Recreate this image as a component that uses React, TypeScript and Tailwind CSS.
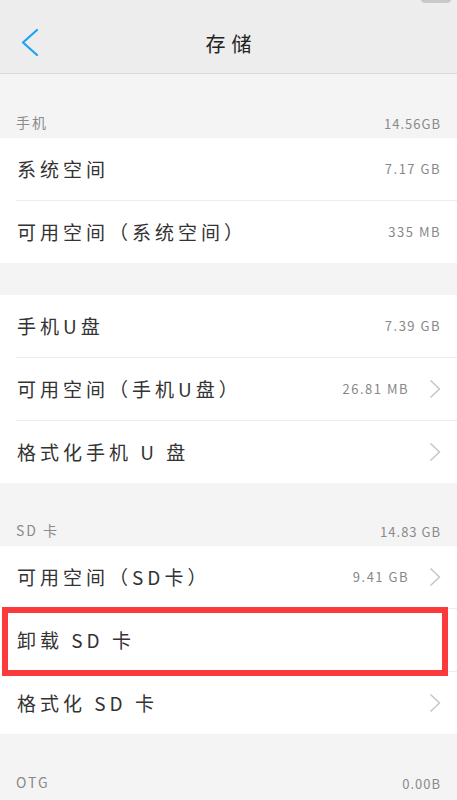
type Row = { label: string; value?: string; arrow?: boolean; marked?: boolean };

const font = { fontFamily: '"Noto Sans CJK SC", "Noto Sans", sans-serif' };

function Arrow() {
  return (
    <svg width="12" height="20" viewBox="0 0 12 20" fill="none" className="text-[#c4c4c4]">
      <polyline points="1.5,1.5 10.5,10 1.5,18.5" stroke="currentColor" strokeWidth="1.4" />
    </svg>
  );
}

function SectionLabel({ label, value, tall = true }: { label: string; value: string; tall?: boolean }) {
  return (
    <div className={`flex items-end justify-between bg-[#f4f4f4] px-4 pb-[5px] ${tall ? 'h-[64px]' : 'h-[63px]'}`}>
      <span className="text-[14px] tracking-[2px] text-[#8a8a8a]">{label}</span>
      <span className="text-[13px] tracking-[1px] text-[#8a8a8a]">{value}</span>
    </div>
  );
}

function Group({ rows }: { rows: Row[] }) {
  return (
    <div className="bg-white">
      {rows.map((r, i) => (
        <div key={r.label} className="relative">
          {i > 0 && <div className="ml-4 h-px bg-[#ececec]" />}
          <div className="flex h-[62px] items-center justify-between pl-[17px] pr-[16px]">
            <span className="text-[19px] tracking-[4px] text-[#333]">{r.label}</span>
            <div className="flex items-center gap-[20px]">
              {r.value && <span className="text-[13px] tracking-[1.5px] text-[#888]">{r.value}</span>}
              {r.arrow && <Arrow />}
            </div>
          </div>
          {r.marked && (
            <div className="pointer-events-none absolute left-[2px] right-[9px] top-[-1px] bottom-[-5px] z-10 border-[6px] border-[#fb3b3b]" />
          )}
        </div>
      ))}
    </div>
  );
}

export default function App() {
  return (
    <div className="min-h-[800px] w-[457px] overflow-hidden bg-[#f4f4f4]" style={font}>
      <div className="relative flex h-[74px] items-center justify-center border-b border-[#d8d8d8] bg-[#ededed] pt-[14px]">
        <div className="absolute right-[6px] top-[-6px] h-[9px] w-[30px] rounded-sm bg-[#c9c9c9]" />
        <button className="absolute left-[20px] top-[28px] text-[#1aa3f5]">
          <svg width="19" height="29" viewBox="0 0 19 29" fill="none">
            <polyline points="17,2 3,14.5 17,27" stroke="currentColor" strokeWidth="2.2" strokeLinecap="round" strokeLinejoin="round" />
          </svg>
        </button>
        <h1 className="pl-[6px] text-[20px] tracking-[6px] text-[#222]">存储</h1>
      </div>

      <SectionLabel label="手机" value="14.56GB" />
      <Group
        rows={[
          { label: '系统空间', value: '7.17 GB' },
          { label: '可用空间（系统空间）', value: '335 MB' },
        ]}
      />

      <div className="h-[32px]" />
      <Group
        rows={[
          { label: '手机U盘', value: '7.39 GB' },
          { label: '可用空间（手机U盘）', value: '26.81 MB', arrow: true },
          { label: '格式化手机 U 盘', arrow: true },
        ]}
      />

      <SectionLabel label="SD 卡" value="14.83 GB" tall={false} />
      <Group
        rows={[
          { label: '可用空间（SD卡）', value: '9.41 GB', arrow: true },
          { label: '卸载 SD 卡', marked: true },
          { label: '格式化 SD 卡', arrow: true },
        ]}
      />

      <SectionLabel label="OTG" value="0.00B" />
    </div>
  );
}
